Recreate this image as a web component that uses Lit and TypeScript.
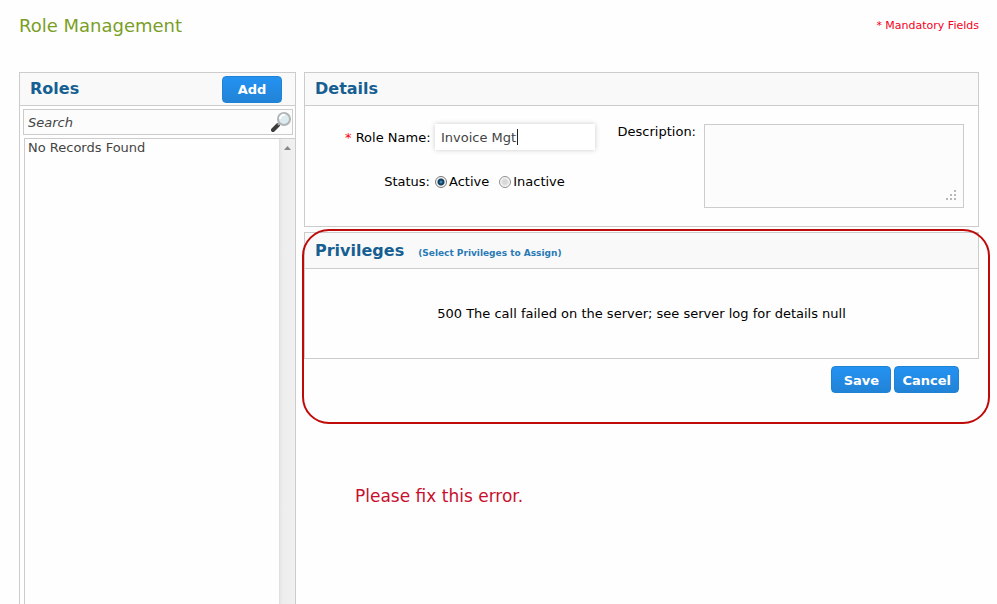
import { LitElement, html, css } from "lit";
import { customElement, state } from "lit/decorators.js";

@customElement("app-root")
export class AppRoot extends LitElement {
  @state() private status = "active";

  static styles = css`
    :host {
      display: flex;
      flex-direction: column;
      box-sizing: border-box;
      min-height: 100vh;
      padding: 0 18px 0 19px;
      background: #fefefe;
      color: #000;
      font: 13px/16px Verdana, "DejaVu Sans", sans-serif;
    }
    *, *::before, *::after { box-sizing: border-box; }
    input, textarea, button { font: inherit; margin: 0; }
    .top {
      display: flex;
      justify-content: space-between;
      align-items: center;
      height: 52px;
      margin-bottom: 20px;
    }
    h1 { margin: 0; font-size: 18px; font-weight: 400; color: #7a9e26; }
    .mandatory { font-size: 11px; color: #f5001d; }
    .columns { flex: 1; display: flex; gap: 8px; }
    .panel { border: 1px solid #ccc; background: #fefefe; }
    .roles {
      flex: 0 0 277px;
      display: flex;
      flex-direction: column;
      border-bottom: 0;
    }
    .head {
      display: flex;
      align-items: center;
      height: 33px;
      padding: 0 13px 0 10px;
      border-bottom: 1px solid #ccc;
      background: #f9f9f9;
    }
    .head.tall { height: 36px; align-items: baseline; padding-top: 9px; }
    h2 { margin: 0; font-size: 16px; line-height: 18px; font-weight: 700; color: #165f92; }
    .hint { margin-left: 14px; font-size: 9px; font-weight: 700; color: #2a7ab5; }
    .btn {
      height: 27px;
      min-width: 60px;
      padding: 2px 7px 0;
      border: 1px solid #1f82d2;
      border-radius: 4px;
      background: linear-gradient(#2492f2, #2183d6);
      color: #fff;
      font-weight: 700;
    }
    .head .btn { margin-left: auto; }
    .search {
      display: flex;
      align-items: center;
      height: 26px;
      margin: 3px 2px 3px 3px;
      border: 1px solid #ccc;
      background: #fcfcfc;
    }
    .search input {
      flex: 1;
      min-width: 0;
      height: 24px;
      padding: 0 4px;
      border: 0;
      outline: 0;
      background: none;
      font-style: italic;
      color: #444;
    }
    .search input::placeholder { color: #444; opacity: 1; }
    .search svg { flex: none; }
    .list {
      flex: 1;
      display: flex;
      margin-left: 4px;
      border: solid #ccc;
      border-width: 1px 0 0 1px;
      color: #444;
    }
    .empty { flex: 1; margin: 0; padding: 1px 3px; }
    .scroll {
      width: 16px;
      border-left: 1px solid #e0e0e0;
      background: linear-gradient(90deg, #e6e6e6, #eee 20%, #f0f0f0);
    }
    .scroll svg { display: block; margin: 7px auto 0; }
    .main { flex: 1; min-width: 0; }
    .form {
      display: flex;
      justify-content: space-between;
      min-height: 120px;
      padding: 18px 14px 18px 40px;
    }
    .row { display: flex; align-items: center; }
    .row + .row { margin-top: 23px; }
    .label { width: 85px; margin-right: 5px; text-align: right; white-space: nowrap; }
    .row .label { padding-top: 1px; }
    .star { color: #f00; }
    .field { position: relative; }
    .field input {
      display: block;
      width: 160px;
      height: 26px;
      padding: 0 6px;
      border: 0;
      outline: 0;
      background: #fff;
      box-shadow: 0 0 5px #ccc;
      color: #444;
      caret-color: transparent;
    }
    .caret { position: absolute; left: 82px; top: 5px; width: 1px; height: 16px; background: #222; }
    .option { display: flex; align-items: center; gap: 2px; margin-right: 10px; }
    .option input {
      appearance: none;
      width: 12px;
      height: 12px;
      border: 1px solid #8e8f8f;
      border-radius: 50%;
      background: radial-gradient(circle, #d8d8d8 30%, #fff 75%);
    }
    .option input:checked {
      border-color: #777;
      background: radial-gradient(circle at 50% 50%, #4fb4dc 0, #123f60 2px, #16405e 3px, #f4f4f4 4px);
    }
    .desc { display: flex; align-items: flex-start; gap: 8px; }
    .area { position: relative; }
    textarea {
      display: block;
      width: 260px;
      height: 84px;
      border: 1px solid #ccc;
      border-radius: 0;
      outline: 0;
      background: #fcfcfc;
      resize: none;
    }
    .grip { position: absolute; right: 8px; bottom: 8px; }
    .privileges { position: relative; margin-top: 5px; }
    .message {
      display: flex;
      align-items: center;
      justify-content: center;
      height: 89px;
      margin: 0;
    }
    .actions { display: flex; justify-content: flex-end; gap: 3px; padding: 7px 20px 0 0; }
    .outline {
      position: absolute;
      inset: -4px -12px -66px -3px;
      border: 2px solid #bf0a0a;
      border-radius: 27px;
      pointer-events: none;
    }
    .note { margin: 94px 0 0 51px; font-size: 17px; line-height: 18px; color: #c8102e; }
  `;

  private option(value: string, text: string) {
    return html`<label class="option">
      <input type="radio" name="status" .checked=${this.status === value}
        @change=${() => (this.status = value)} />${text}
    </label>`;
  }

  render() {
    return html`
      <header class="top">
        <h1>Role Management</h1>
        <span class="mandatory">* Mandatory Fields</span>
      </header>
      <div class="columns">
        <section class="panel roles">
          <div class="head"><h2>Roles</h2><button class="btn" type="button">Add</button></div>
          <div class="search">
            <input type="text" placeholder="Search" aria-label="Search roles" />
            <svg width="21" height="22" viewBox="0 0 21 22" aria-hidden="true">
              <path d="M2 19 7 14" stroke="#3c3c3c" stroke-width="4" stroke-linecap="round" />
              <path d="M7 14 9 12" stroke="#aaa" stroke-width="2" />
              <circle cx="13" cy="8" r="6" fill="#dcebf0" stroke="#b0b4b5" stroke-width="2" />
              <path d="M9 8a4 4 0 0 1 5-4" fill="none" stroke="#fff" stroke-width="2" />
            </svg>
          </div>
          <div class="list">
            <p class="empty">No Records Found</p>
            <div class="scroll">
              <svg width="7" height="4" viewBox="0 0 7 4" aria-hidden="true"><path d="M0 4 3.5 0 7 4z" fill="#888" /></svg>
            </div>
          </div>
        </section>
        <main class="main">
          <section class="panel">
            <div class="head"><h2>Details</h2></div>
            <div class="form">
              <div>
                <div class="row">
                  <label class="label" for="role"><span class="star">*</span> Role Name:</label>
                  <div class="field">
                    <input id="role" type="text" value="Invoice Mgt" />
                    <span class="caret"></span>
                  </div>
                </div>
                <div class="row" role="radiogroup" aria-labelledby="status">
                  <span class="label" id="status">Status:</span>
                  ${this.option("active", "Active")} ${this.option("inactive", "Inactive")}
                </div>
              </div>
              <div class="desc">
                <label for="description">Description:</label>
                <div class="area">
                  <textarea id="description"></textarea>
                  <svg class="grip" width="10" height="10" viewBox="0 0 10 10" fill="#b8b8b8" aria-hidden="true">
                    <path d="M8 0h2v2h-2zM4 4h2v2h-2zM8 4h2v2h-2zM0 8h2v2h-2zM4 8h2v2h-2zM8 8h2v2h-2z" />
                  </svg>
                </div>
              </div>
            </div>
          </section>
          <section class="panel privileges">
            <div class="head tall">
              <h2>Privileges</h2><span class="hint">(Select Privileges to Assign)</span>
            </div>
            <p class="message">500 The call failed on the server; see server log for details null</p>
            <div class="outline"></div>
          </section>
          <div class="actions">
            <button class="btn" type="button">Save</button>
            <button class="btn" type="button">Cancel</button>
          </div>
          <p class="note">Please fix this error.</p>
        </main>
      </div>
    `;
  }
}
